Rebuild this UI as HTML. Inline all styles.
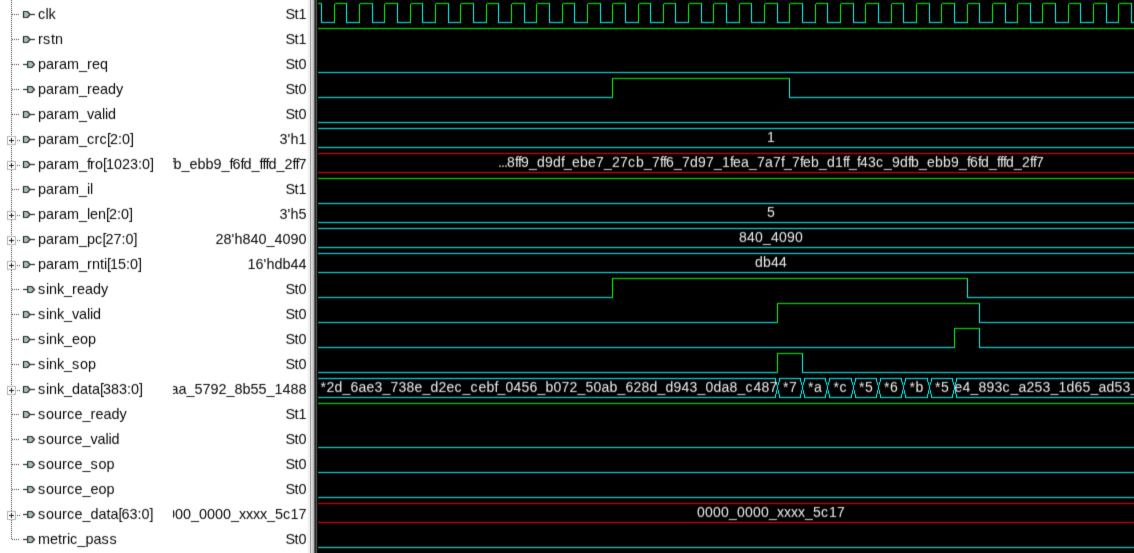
<!DOCTYPE html>
<html><head><meta charset="utf-8"><title>wave</title>
<style>
html,body{margin:0;padding:0;background:#fff;overflow:hidden}
body{width:1134px;height:553px;position:relative;font-family:"Liberation Sans",sans-serif;font-size:14.3px;letter-spacing:0.1px;color:#1a1a1a}
#tree{position:absolute;left:0;top:0}
#div{position:absolute;left:307px;top:0;width:11px;height:553px;background:linear-gradient(to right,#fafafa 0px,#fafafa 1px,#f2f2f2 1px,#f2f2f2 2px,#f0f0f0 2px,#f0f0f0 3px,#a2a2a2 3px,#a2a2a2 4px,#dcdcdc 4px,#dcdcdc 5px,#d0d0d0 5px,#d0d0d0 6px,#b8b8b8 6px,#b8b8b8 7px,#606060 7px,#606060 8px,#303030 8px,#303030 9px,#4a4a4a 9px,#4a4a4a 10px,#101010 10px,#101010 11px)}
#wbg{position:absolute;left:318px;top:0;width:816px;height:553px;background:#000}
#wave{position:absolute;left:318px;top:0;width:816px;height:553px}
#wave text{font-family:"Liberation Sans",sans-serif;font-size:14px;fill:#ececec;stroke:none}
.lt text{font-family:"Liberation Sans",sans-serif;font-size:14.4px;fill:#0a0a0a;stroke:none}
</style></head><body>
<svg id="tree" width="308" height="553" viewBox="0 0 308 553" shape-rendering="crispEdges"><clipPath id="vc"><rect x="173" y="0" width="136" height="553"/></clipPath><filter id="bt" x="0" y="0" width="308" height="553" filterUnits="userSpaceOnUse"><feConvolveMatrix order="3" kernelMatrix="0.0112 0.1176 0.0112 0.0576 0.6048 0.0576 0.0112 0.1176 0.0112" divisor="1" edgeMode="none" color-interpolation-filters="sRGB"/></filter><g filter="url(#bt)"><g class="lt"><text x="38 45.5 48.5" y="19">clk</text><text x="38 43 51 55" y="44">rstn</text><text x="38 46 54 59 67 79 87 92 100" y="69">param_req</text><text x="38 46 54 59 67 79 87 92 100 108 116" y="94">param_ready</text><text x="38 46 54 59 67 79 87 94 102 105 108" y="119">param_valid</text><text x="38 46 54 59 67 79 87 94.5 99.5 107 110 118 122 130" y="144">param_crc[2:0]</text><text x="38 46 54 59 67 79 87 90 95 103 106 114 122 130 138 142 150" y="169">param_fro[1023:0]</text><text x="38 46 54 59 67 79 87 90" y="194">param_il</text><text x="38 46 54 59 67 79 87 90 98 106 109 117 121 129" y="219">param_len[2:0]</text><text x="38 46 54 59 67 79 87 95 102.5 105.5 113.5 121.5 125.5 133.5" y="244">param_pc[27:0]</text><text x="38 46 54 59 67 79 87 92 100 104 107 110 118 126 130 138" y="269">param_rnti[15:0]</text><text x="38 46 49 57 64 72 77 85 93 101" y="294">sink_ready</text><text x="38 46 49 57 64 72 79 87 90 93" y="319">sink_valid</text><text x="38 46 49 57 64 72 80 88" y="344">sink_eop</text><text x="38 46 49 57 64 72 80 88" y="369">sink_sop</text><text x="38 46 49 57 64 72 80 88 92 100 103 111 119 127 131 139" y="394">sink_data[383:0]</text><text x="38 46 54 62 67 74.5 82.5 90.5 95.5 103.5 111.5 119.5" y="419">source_ready</text><text x="38 46 54 62 67 74.5 82.5 90.5 97.5 105.5 108.5 111.5" y="444">source_valid</text><text x="38 46 54 62 67 74.5 82.5 90.5 98.5 106.5" y="469">source_sop</text><text x="38 46 54 62 67 74.5 82.5 90.5 98.5 106.5" y="494">source_eop</text><text x="38 46 54 62 67 74.5 82.5 90.5 98.5 106.5 110.5 118.5 121.5 129.5 137.5 141.5 149.5" y="519">source_data[63:0]</text><text x="38 50 58 62 67 70 77.5 85.5 93.5 101.5 109.5" y="544">metric_pass</text></g><g class="lt" clip-path="url(#vc)"><text x="285.5 294.5 298.5" y="19">St1</text><text x="285.5 294.5 298.5" y="44">St1</text><text x="285.5 294.5 298.5" y="69">St0</text><text x="285.5 294.5 298.5" y="94">St0</text><text x="285.5 294.5 298.5" y="119">St0</text><text x="279.5 287.5 290.5 298.5" y="144">3'h1</text><text x="170.5 173.5 181.5 189.5 197.5 205.5 213.5 221.5 229.5 232.5 240.5 243.5 251.5 259.5 262.5 265.5 268.5 276.5 284.5 292.5 295.5 298.5" y="169">fb_ebb9_f6fd_fffd_2ff7</text><text x="285.5 294.5 298.5" y="194">St1</text><text x="279.5 287.5 290.5 298.5" y="219">3'h5</text><text x="215.5 223.5 231.5 234.5 242.5 250.5 258.5 266.5 274.5 282.5 290.5 298.5" y="244">28'h840_4090</text><text x="247.5 255.5 263.5 266.5 274.5 282.5 290.5 298.5" y="269">16'hdb44</text><text x="285.5 294.5 298.5" y="294">St0</text><text x="285.5 294.5 298.5" y="319">St0</text><text x="285.5 294.5 298.5" y="344">St0</text><text x="285.5 294.5 298.5" y="369">St0</text><text x="170.5 178.5 186.5 194.5 202.5 210.5 218.5 226.5 234.5 242.5 250.5 258.5 266.5 274.5 282.5 290.5 298.5" y="394">aa_5792_8b55_1488</text><text x="285.5 294.5 298.5" y="419">St1</text><text x="285.5 294.5 298.5" y="444">St0</text><text x="285.5 294.5 298.5" y="469">St0</text><text x="285.5 294.5 298.5" y="494">St0</text><text x="159 167 175 183 191 199 207 215 223 231 239 246 253 260 267 275 283 290.5 298.5" y="519">0000_0000_xxxx_5c17</text><text x="285.5 294.5 298.5" y="544">St0</text></g><line x1="11.5" y1="0" x2="11.5" y2="540" stroke="#3c3c3c" stroke-width="1" stroke-dasharray="1 1"/><line x1="12" y1="14.5" x2="20" y2="14.5" stroke="#3c3c3c" stroke-dasharray="1 1"/><g shape-rendering="auto"><path d="M23.5 11.5H27.5L30 14.5L27.5 17.5H23.5Z" fill="#a3c4b0" stroke="#2a2a2a" stroke-width="1.2" stroke-linejoin="round"/><path d="M30 14.5H35" stroke="#2a2a2a" stroke-width="1.2"/></g><line x1="12" y1="39.5" x2="20" y2="39.5" stroke="#3c3c3c" stroke-dasharray="1 1"/><g shape-rendering="auto"><path d="M23.5 36.5H27.5L30 39.5L27.5 42.5H23.5Z" fill="#a3c4b0" stroke="#2a2a2a" stroke-width="1.2" stroke-linejoin="round"/><path d="M30 39.5H35" stroke="#2a2a2a" stroke-width="1.2"/></g><line x1="12" y1="64.5" x2="20" y2="64.5" stroke="#3c3c3c" stroke-dasharray="1 1"/><g shape-rendering="auto"><path d="M23 64.5H27.5" stroke="#2a2a2a" stroke-width="1.2"/><path d="M27.7 61.5H31.7L34.5 64.5L31.7 67.5H27.7Z" fill="#a3c4b0" stroke="#2a2a2a" stroke-width="1.2" stroke-linejoin="round"/></g><line x1="12" y1="89.5" x2="20" y2="89.5" stroke="#3c3c3c" stroke-dasharray="1 1"/><g shape-rendering="auto"><path d="M23 89.5H27.5" stroke="#2a2a2a" stroke-width="1.2"/><path d="M27.7 86.5H31.7L34.5 89.5L31.7 92.5H27.7Z" fill="#a3c4b0" stroke="#2a2a2a" stroke-width="1.2" stroke-linejoin="round"/></g><line x1="12" y1="114.5" x2="20" y2="114.5" stroke="#3c3c3c" stroke-dasharray="1 1"/><g shape-rendering="auto"><path d="M23.5 111.5H27.5L30 114.5L27.5 117.5H23.5Z" fill="#a3c4b0" stroke="#2a2a2a" stroke-width="1.2" stroke-linejoin="round"/><path d="M30 114.5H35" stroke="#2a2a2a" stroke-width="1.2"/></g><rect x="7.5" y="136.5" width="8" height="8" fill="#fff" stroke="#b4b4b4"/><path d="M9 140.5H14M11.5 138V143" stroke="#222" fill="none"/><line x1="17" y1="140.5" x2="21" y2="140.5" stroke="#3c3c3c" stroke-dasharray="1 1"/><g shape-rendering="auto"><path d="M23.5 136.5H27.5L30 139.5L27.5 142.5H23.5Z" fill="#a3c4b0" stroke="#2a2a2a" stroke-width="1.2" stroke-linejoin="round"/><path d="M30 139.5H35" stroke="#2a2a2a" stroke-width="1.2"/></g><rect x="7.5" y="161.5" width="8" height="8" fill="#fff" stroke="#b4b4b4"/><path d="M9 165.5H14M11.5 163V168" stroke="#222" fill="none"/><line x1="17" y1="165.5" x2="21" y2="165.5" stroke="#3c3c3c" stroke-dasharray="1 1"/><g shape-rendering="auto"><path d="M23.5 161.5H27.5L30 164.5L27.5 167.5H23.5Z" fill="#a3c4b0" stroke="#2a2a2a" stroke-width="1.2" stroke-linejoin="round"/><path d="M30 164.5H35" stroke="#2a2a2a" stroke-width="1.2"/></g><line x1="12" y1="189.5" x2="20" y2="189.5" stroke="#3c3c3c" stroke-dasharray="1 1"/><g shape-rendering="auto"><path d="M23.5 186.5H27.5L30 189.5L27.5 192.5H23.5Z" fill="#a3c4b0" stroke="#2a2a2a" stroke-width="1.2" stroke-linejoin="round"/><path d="M30 189.5H35" stroke="#2a2a2a" stroke-width="1.2"/></g><rect x="7.5" y="211.5" width="8" height="8" fill="#fff" stroke="#b4b4b4"/><path d="M9 215.5H14M11.5 213V218" stroke="#222" fill="none"/><line x1="17" y1="215.5" x2="21" y2="215.5" stroke="#3c3c3c" stroke-dasharray="1 1"/><g shape-rendering="auto"><path d="M23.5 211.5H27.5L30 214.5L27.5 217.5H23.5Z" fill="#a3c4b0" stroke="#2a2a2a" stroke-width="1.2" stroke-linejoin="round"/><path d="M30 214.5H35" stroke="#2a2a2a" stroke-width="1.2"/></g><rect x="7.5" y="236.5" width="8" height="8" fill="#fff" stroke="#b4b4b4"/><path d="M9 240.5H14M11.5 238V243" stroke="#222" fill="none"/><line x1="17" y1="240.5" x2="21" y2="240.5" stroke="#3c3c3c" stroke-dasharray="1 1"/><g shape-rendering="auto"><path d="M23.5 236.5H27.5L30 239.5L27.5 242.5H23.5Z" fill="#a3c4b0" stroke="#2a2a2a" stroke-width="1.2" stroke-linejoin="round"/><path d="M30 239.5H35" stroke="#2a2a2a" stroke-width="1.2"/></g><rect x="7.5" y="261.5" width="8" height="8" fill="#fff" stroke="#b4b4b4"/><path d="M9 265.5H14M11.5 263V268" stroke="#222" fill="none"/><line x1="17" y1="265.5" x2="21" y2="265.5" stroke="#3c3c3c" stroke-dasharray="1 1"/><g shape-rendering="auto"><path d="M23.5 261.5H27.5L30 264.5L27.5 267.5H23.5Z" fill="#a3c4b0" stroke="#2a2a2a" stroke-width="1.2" stroke-linejoin="round"/><path d="M30 264.5H35" stroke="#2a2a2a" stroke-width="1.2"/></g><line x1="12" y1="289.5" x2="20" y2="289.5" stroke="#3c3c3c" stroke-dasharray="1 1"/><g shape-rendering="auto"><path d="M23 289.5H27.5" stroke="#2a2a2a" stroke-width="1.2"/><path d="M27.7 286.5H31.7L34.5 289.5L31.7 292.5H27.7Z" fill="#a3c4b0" stroke="#2a2a2a" stroke-width="1.2" stroke-linejoin="round"/></g><line x1="12" y1="314.5" x2="20" y2="314.5" stroke="#3c3c3c" stroke-dasharray="1 1"/><g shape-rendering="auto"><path d="M23.5 311.5H27.5L30 314.5L27.5 317.5H23.5Z" fill="#a3c4b0" stroke="#2a2a2a" stroke-width="1.2" stroke-linejoin="round"/><path d="M30 314.5H35" stroke="#2a2a2a" stroke-width="1.2"/></g><line x1="12" y1="339.5" x2="20" y2="339.5" stroke="#3c3c3c" stroke-dasharray="1 1"/><g shape-rendering="auto"><path d="M23.5 336.5H27.5L30 339.5L27.5 342.5H23.5Z" fill="#a3c4b0" stroke="#2a2a2a" stroke-width="1.2" stroke-linejoin="round"/><path d="M30 339.5H35" stroke="#2a2a2a" stroke-width="1.2"/></g><line x1="12" y1="364.5" x2="20" y2="364.5" stroke="#3c3c3c" stroke-dasharray="1 1"/><g shape-rendering="auto"><path d="M23.5 361.5H27.5L30 364.5L27.5 367.5H23.5Z" fill="#a3c4b0" stroke="#2a2a2a" stroke-width="1.2" stroke-linejoin="round"/><path d="M30 364.5H35" stroke="#2a2a2a" stroke-width="1.2"/></g><rect x="7.5" y="386.5" width="8" height="8" fill="#fff" stroke="#b4b4b4"/><path d="M9 390.5H14M11.5 388V393" stroke="#222" fill="none"/><line x1="17" y1="390.5" x2="21" y2="390.5" stroke="#3c3c3c" stroke-dasharray="1 1"/><g shape-rendering="auto"><path d="M23.5 386.5H27.5L30 389.5L27.5 392.5H23.5Z" fill="#a3c4b0" stroke="#2a2a2a" stroke-width="1.2" stroke-linejoin="round"/><path d="M30 389.5H35" stroke="#2a2a2a" stroke-width="1.2"/></g><line x1="12" y1="414.5" x2="20" y2="414.5" stroke="#3c3c3c" stroke-dasharray="1 1"/><g shape-rendering="auto"><path d="M23.5 411.5H27.5L30 414.5L27.5 417.5H23.5Z" fill="#a3c4b0" stroke="#2a2a2a" stroke-width="1.2" stroke-linejoin="round"/><path d="M30 414.5H35" stroke="#2a2a2a" stroke-width="1.2"/></g><line x1="12" y1="439.5" x2="20" y2="439.5" stroke="#3c3c3c" stroke-dasharray="1 1"/><g shape-rendering="auto"><path d="M23 439.5H27.5" stroke="#2a2a2a" stroke-width="1.2"/><path d="M27.7 436.5H31.7L34.5 439.5L31.7 442.5H27.7Z" fill="#a3c4b0" stroke="#2a2a2a" stroke-width="1.2" stroke-linejoin="round"/></g><line x1="12" y1="464.5" x2="20" y2="464.5" stroke="#3c3c3c" stroke-dasharray="1 1"/><g shape-rendering="auto"><path d="M23 464.5H27.5" stroke="#2a2a2a" stroke-width="1.2"/><path d="M27.7 461.5H31.7L34.5 464.5L31.7 467.5H27.7Z" fill="#a3c4b0" stroke="#2a2a2a" stroke-width="1.2" stroke-linejoin="round"/></g><line x1="12" y1="489.5" x2="20" y2="489.5" stroke="#3c3c3c" stroke-dasharray="1 1"/><g shape-rendering="auto"><path d="M23 489.5H27.5" stroke="#2a2a2a" stroke-width="1.2"/><path d="M27.7 486.5H31.7L34.5 489.5L31.7 492.5H27.7Z" fill="#a3c4b0" stroke="#2a2a2a" stroke-width="1.2" stroke-linejoin="round"/></g><rect x="7.5" y="511.5" width="8" height="8" fill="#fff" stroke="#b4b4b4"/><path d="M9 515.5H14M11.5 513V518" stroke="#222" fill="none"/><line x1="17" y1="515.5" x2="21" y2="515.5" stroke="#3c3c3c" stroke-dasharray="1 1"/><g shape-rendering="auto"><path d="M23 514.5H27.5" stroke="#2a2a2a" stroke-width="1.2"/><path d="M27.7 511.5H31.7L34.5 514.5L31.7 517.5H27.7Z" fill="#a3c4b0" stroke="#2a2a2a" stroke-width="1.2" stroke-linejoin="round"/></g><line x1="12" y1="539.5" x2="20" y2="539.5" stroke="#3c3c3c" stroke-dasharray="1 1"/><g shape-rendering="auto"><path d="M23 539.5H27.5" stroke="#2a2a2a" stroke-width="1.2"/><path d="M27.7 536.5H31.7L34.5 539.5L31.7 542.5H27.7Z" fill="#a3c4b0" stroke="#2a2a2a" stroke-width="1.2" stroke-linejoin="round"/></g></g></svg>
<div id="div"></div><div id="wbg"></div>
<svg id="wave" width="816" height="553" viewBox="318 0 816 553" shape-rendering="crispEdges" fill="none" stroke-width="1"><filter id="bw" x="318" y="0" width="816" height="553" filterUnits="userSpaceOnUse"><feConvolveMatrix order="3" kernelMatrix="0.0180 0.1440 0.0180 0.0640 0.5120 0.0640 0.0180 0.1440 0.0180" divisor="1" edgeMode="none" color-interpolation-filters="sRGB"/></filter><g filter="url(#bw)"><path d="M318 3.5H321.5M334.5 22.5V3.5M334.5 3.5H346.5M359.5 22.5V3.5M359.5 3.5H372.5M384.5 22.5V3.5M384.5 3.5H397.5M410.5 22.5V3.5M410.5 3.5H422.5M435.5 22.5V3.5M435.5 3.5H448.5M460.5 22.5V3.5M460.5 3.5H473.5M486.5 22.5V3.5M486.5 3.5H498.5M511.5 22.5V3.5M511.5 3.5H524.5M536.5 22.5V3.5M536.5 3.5H549.5M562.5 22.5V3.5M562.5 3.5H574.5M587.5 22.5V3.5M587.5 3.5H600.5M612.5 22.5V3.5M612.5 3.5H625.5M638.5 22.5V3.5M638.5 3.5H650.5M663.5 22.5V3.5M663.5 3.5H675.5M688.5 22.5V3.5M688.5 3.5H701.5M713.5 22.5V3.5M713.5 3.5H726.5M739.5 22.5V3.5M739.5 3.5H751.5M764.5 22.5V3.5M764.5 3.5H777.5M789.5 22.5V3.5M789.5 3.5H802.5M815.5 22.5V3.5M815.5 3.5H827.5M840.5 22.5V3.5M840.5 3.5H853.5M865.5 22.5V3.5M865.5 3.5H878.5M891.5 22.5V3.5M891.5 3.5H903.5M916.5 22.5V3.5M916.5 3.5H929.5M941.5 22.5V3.5M941.5 3.5H954.5M967.5 22.5V3.5M967.5 3.5H979.5M992.5 22.5V3.5M992.5 3.5H1005.5M1017.5 22.5V3.5M1017.5 3.5H1030.5M1042.5 22.5V3.5M1042.5 3.5H1055.5M1068.5 22.5V3.5M1068.5 3.5H1080.5M1093.5 22.5V3.5M1093.5 3.5H1106.5M1118.5 22.5V3.5M1118.5 3.5H1131.5M1144.5 22.5V3.5" stroke="#00ff00"/><path d="M321.5 3.5V22.5H334.5M346.5 3.5V22.5H359.5M372.5 3.5V22.5H384.5M397.5 3.5V22.5H410.5M422.5 3.5V22.5H435.5M448.5 3.5V22.5H460.5M473.5 3.5V22.5H486.5M498.5 3.5V22.5H511.5M524.5 3.5V22.5H536.5M549.5 3.5V22.5H562.5M574.5 3.5V22.5H587.5M600.5 3.5V22.5H612.5M625.5 3.5V22.5H638.5M650.5 3.5V22.5H663.5M675.5 3.5V22.5H688.5M701.5 3.5V22.5H713.5M726.5 3.5V22.5H739.5M751.5 3.5V22.5H764.5M777.5 3.5V22.5H789.5M802.5 3.5V22.5H815.5M827.5 3.5V22.5H840.5M853.5 3.5V22.5H865.5M878.5 3.5V22.5H891.5M903.5 3.5V22.5H916.5M929.5 3.5V22.5H941.5M954.5 3.5V22.5H967.5M979.5 3.5V22.5H992.5M1005.5 3.5V22.5H1017.5M1030.5 3.5V22.5H1042.5M1055.5 3.5V22.5H1068.5M1080.5 3.5V22.5H1093.5M1106.5 3.5V22.5H1118.5M1131.5 3.5V22.5H1144.5" stroke="#00ffff"/><path d="M318 28.5H1134" stroke="#00ff00"/><path d="M318 72.5H1134" stroke="#00ffff"/><path d="M318 97.5H612.5" stroke="#00ffff"/><path d="M612.5 78.5V97.5" stroke="#00ff00"/><path d="M612 78.5H789.5" stroke="#00ff00"/><path d="M789.5 78.5V97.5" stroke="#00ffff"/><path d="M789 97.5H1134" stroke="#00ffff"/><path d="M318 122.5H1134" stroke="#00ffff"/><path d="M318 178.5H1134" stroke="#00ff00"/><path d="M318 297.5H612.5" stroke="#00ffff"/><path d="M612.5 278.5V297.5" stroke="#00ff00"/><path d="M612 278.5H967.5" stroke="#00ff00"/><path d="M967.5 278.5V297.5" stroke="#00ffff"/><path d="M967 297.5H1134" stroke="#00ffff"/><path d="M318 322.5H777.5" stroke="#00ffff"/><path d="M777.5 303.5V322.5" stroke="#00ff00"/><path d="M777 303.5H979.5" stroke="#00ff00"/><path d="M979.5 303.5V322.5" stroke="#00ffff"/><path d="M979 322.5H1134" stroke="#00ffff"/><path d="M318 347.5H954.5" stroke="#00ffff"/><path d="M954.5 328.5V347.5" stroke="#00ff00"/><path d="M954 328.5H979.5" stroke="#00ff00"/><path d="M979.5 328.5V347.5" stroke="#00ffff"/><path d="M979 347.5H1134" stroke="#00ffff"/><path d="M318 372.5H777.5" stroke="#00ffff"/><path d="M777.5 353.5V372.5" stroke="#00ff00"/><path d="M777 353.5H802.5" stroke="#00ff00"/><path d="M802.5 353.5V372.5" stroke="#00ffff"/><path d="M802 372.5H1134" stroke="#00ffff"/><path d="M318 403.5H1134" stroke="#00ff00"/><path d="M318 447.5H1134" stroke="#00ffff"/><path d="M318 472.5H1134" stroke="#00ffff"/><path d="M318 497.5H1134" stroke="#00ffff"/><path d="M318 547.5H1134" stroke="#00ffff"/><path d="M318 128.5H1134M318 147.5H1134" stroke="#00ffff"/><text x="767" y="141.8">1</text><path d="M318 153.5H1134M318 172.5H1134" stroke="#ff0000"/><text x="498 501 504 507 515 518 521 529 537 545 553 561 564 572 580 588 596 604 612 620 628 636 644 652 660 663 666 674 682 690 698 706 714 722 730 733 741 749 757 765 773 781 784 792 800 803 811 819 827 835 843 846 849 857 860 868 876 884 892 900 908 911 919 927 935 943 951 959 967 970 978 981 989 997 1000 1003 1006 1014 1022 1030 1033 1036" y="166.8">...8ff9_d9df_ebe7_27cb_7ff6_7d97_1fea_7a7f_7feb_d1ff_f43c_9dfb_ebb9_f6fd_fffd_2ff7</text><path d="M318 203.5H1134M318 222.5H1134" stroke="#00ffff"/><text x="767" y="216.8">5</text><path d="M318 228.5H1134M318 247.5H1134" stroke="#00ffff"/><text x="739 747 755 763 771 779 787 795" y="241.8">840_4090</text><path d="M318 253.5H1134M318 272.5H1134" stroke="#00ffff"/><text x="755 763 771 779" y="266.8">db44</text><path d="M318 378.5H776.0M318 397.5H776.0M779.0 378.5H801.0M779.0 397.5H801.0M804.0 378.5H826.0M804.0 397.5H826.0M829.0 378.5H852.0M829.0 397.5H852.0M855.0 378.5H877.0M855.0 397.5H877.0M880.0 378.5H902.0M880.0 397.5H902.0M905.0 378.5H928.0M905.0 397.5H928.0M931.0 378.5H953.0M931.0 397.5H953.0M956.0 378.5H1134M956.0 397.5H1134M775.5 379.0V382.0M776.5 382.0V385.0M776.5 390.0V394.0M775.5 394.0V397.0M779.5 379.0V382.0M778.5 382.0V385.0M778.5 390.0V394.0M779.5 394.0V397.0M777.5 385.0V390.0M800.5 379.0V382.0M801.5 382.0V385.0M801.5 390.0V394.0M800.5 394.0V397.0M804.5 379.0V382.0M803.5 382.0V385.0M803.5 390.0V394.0M804.5 394.0V397.0M802.5 385.0V390.0M825.5 379.0V382.0M826.5 382.0V385.0M826.5 390.0V394.0M825.5 394.0V397.0M829.5 379.0V382.0M828.5 382.0V385.0M828.5 390.0V394.0M829.5 394.0V397.0M827.5 385.0V390.0M851.5 379.0V382.0M852.5 382.0V385.0M852.5 390.0V394.0M851.5 394.0V397.0M855.5 379.0V382.0M854.5 382.0V385.0M854.5 390.0V394.0M855.5 394.0V397.0M853.5 385.0V390.0M876.5 379.0V382.0M877.5 382.0V385.0M877.5 390.0V394.0M876.5 394.0V397.0M880.5 379.0V382.0M879.5 382.0V385.0M879.5 390.0V394.0M880.5 394.0V397.0M878.5 385.0V390.0M901.5 379.0V382.0M902.5 382.0V385.0M902.5 390.0V394.0M901.5 394.0V397.0M905.5 379.0V382.0M904.5 382.0V385.0M904.5 390.0V394.0M905.5 394.0V397.0M903.5 385.0V390.0M927.5 379.0V382.0M928.5 382.0V385.0M928.5 390.0V394.0M927.5 394.0V397.0M931.5 379.0V382.0M930.5 382.0V385.0M930.5 390.0V394.0M931.5 394.0V397.0M929.5 385.0V390.0M952.5 379.0V382.0M953.5 382.0V385.0M953.5 390.0V394.0M952.5 394.0V397.0M956.5 379.0V382.0M955.5 382.0V385.0M955.5 390.0V394.0M956.5 394.0V397.0M954.5 385.0V390.0" stroke="#00ffff"/><text x="320.5 326.5 334.5 342.5 350.5 358.5 366.5 374.5 382.5 390.5 398.5 406.5 414.5 422.5 430.5 438.5 446.5 454.5 462.5 470.5 478.5 486.5 494.5 497.5 505.5 513.5 521.5 529.5 537.5 545.5 553.5 561.5 569.5 577.5 585.5 593.5 601.5 609.5 617.5 625.5 633.5 641.5 649.5 657.5 665.5 673.5 681.5 689.5 697.5 705.5 713.5 721.5 729.5 737.5 745.5 753.5 761.5 769.5" y="391.8">*2d_6ae3_738e_d2ec_cebf_0456_b072_50ab_628d_d943_0da8_c487</text><text x="783 789" y="391.8">*7</text><text x="808 814" y="391.8">*a</text><text x="833.5 839.5" y="391.8">*c</text><text x="859 865" y="391.8">*5</text><text x="884 890" y="391.8">*6</text><text x="909.5 915.5" y="391.8">*b</text><text x="935 941" y="391.8">*5</text><text x="954.5 962.5 970.5 978.5 986.5 994.5 1002.5 1010.5 1018.5 1026.5 1034.5 1042.5 1050.5 1058.5 1066.5 1074.5 1082.5 1090.5 1098.5 1106.5 1114.5 1122.5 1130.5 1138.5" y="391.8">e4_893c_a253_1d65_ad53_6</text><path d="M318 503.5H1134M318 522.5H1134" stroke="#ff0000"/><text x="697 705 713 721 729 737 745 753 761 769 777 784 791 798 805 813 821 829 837" y="516.8">0000_0000_xxxx_5c17</text></g></svg>
</body></html>
